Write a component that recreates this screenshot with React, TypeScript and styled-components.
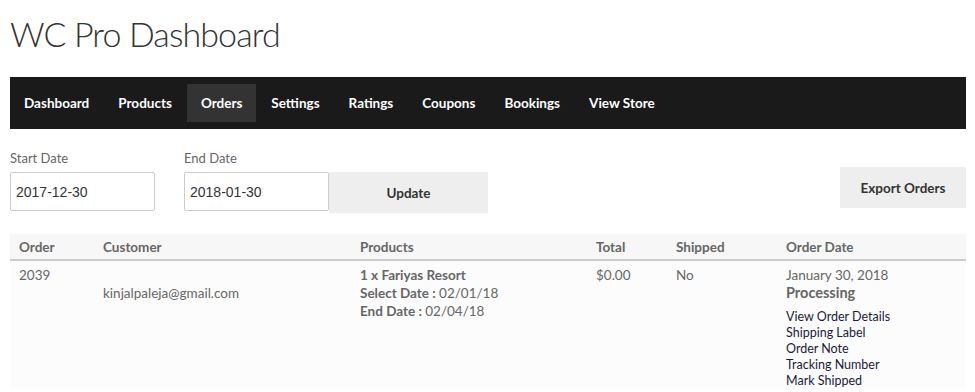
import React from "react";
import styled, { createGlobalStyle } from "styled-components";

const GlobalStyle = createGlobalStyle`
  body {
    margin: 0;
    background: #fff;
    font-family: Lato, "Open Sans", sans-serif;
  }
`;

const navItems = [
  "Dashboard",
  "Products",
  "Orders",
  "Settings",
  "Ratings",
  "Coupons",
  "Bookings",
  "View Store",
];

const orderLinks = [
  "View Order Details",
  "Shipping Label",
  "Order Note",
  "Tracking Number",
  "Mark Shipped",
];

const App = () => {
  return (
    <>
      <GlobalStyle />
      <Page>
        <Title>WC Pro Dashboard</Title>
        <NavBar>
          {navItems.map(item => (
            <NavItem key={item} active={item === "Orders"}>
              {item}
            </NavItem>
          ))}
        </NavBar>

        <Filters>
          <DateGroup>
            <Label>Start Date</Label>
            <DateInput defaultValue="2017-12-30" />
          </DateGroup>
          <DateGroup>
            <Label>End Date</Label>
            <InputRow>
              <DateInput defaultValue="2018-01-30" />
              <UpdateButton>Update</UpdateButton>
            </InputRow>
          </DateGroup>
          <ExportButton>Export Orders</ExportButton>
        </Filters>

        <Table>
          <thead>
            <tr>
              <Th width={84}>Order</Th>
              <Th width={257}>Customer</Th>
              <Th width={236}>Products</Th>
              <Th width={80}>Total</Th>
              <Th width={110}>Shipped</Th>
              <Th>Order Date</Th>
            </tr>
          </thead>
          <tbody>
            <tr>
              <Td>2039</Td>
              <Td>
                <Line>&nbsp;</Line>
                <Line>kinjalpaleja@gmail.com</Line>
              </Td>
              <Td>
                <Line bold>1 x Fariyas Resort</Line>
                <Line bold>
                  Select Date : <span>02/01/18</span>
                </Line>
                <Line bold>
                  End Date : <span>02/04/18</span>
                </Line>
              </Td>
              <Td>$0.00</Td>
              <Td>No</Td>
              <Td>
                <Line>January 30, 2018</Line>
                <Status>Processing</Status>
                <Links>
                  {orderLinks.map(l => (
                    <OrderLink key={l} href="#">
                      {l}
                    </OrderLink>
                  ))}
                </Links>
              </Td>
            </tr>
          </tbody>
        </Table>
      </Page>
    </>
  );
};

export default App;

const Page = styled.div`
  padding: 0 9px 0 10px;
`;

const Title = styled.h1`
  margin: 0;
  padding-top: 12px;
  height: 77px;
  box-sizing: border-box;
  font-family: Lato, sans-serif;
  font-weight: 300;
  font-size: 34px;
  line-height: 44px;
  color: #333;
  letter-spacing: -0.9px;
`;

const NavBar = styled.nav`
  display: flex;
  align-items: center;
  gap: 1px;
  height: 52px;
  background: #1a1a1a;
`;

const NavItem = styled.a<{ active?: boolean }>`
  display: flex;
  align-items: center;
  height: 38px;
  padding: 0 14px;
  font-size: 13.5px;
  font-weight: 700;
  color: #fff;
  background: ${p => (p.active ? "#333" : "transparent")};
  cursor: pointer;
`;

const Filters = styled.div`
  display: flex;
  align-items: flex-start;
  gap: 29px;
  padding-top: 21px;
  height: 105px;
  box-sizing: border-box;
`;

const DateGroup = styled.div`
  display: flex;
  flex-direction: column;
  gap: 5px;
`;

const Label = styled.label`
  font-size: 13px;
  line-height: 17px;
  color: #666;
`;

const InputRow = styled.div`
  display: flex;
  align-items: flex-start;
`;

const DateInput = styled.input`
  width: 145px;
  height: 39px;
  box-sizing: border-box;
  border: 1px solid #ccc;
  border-radius: 2px;
  padding: 0 5px;
  font-family: "Liberation Sans", Arial, sans-serif;
  font-size: 14px;
  color: #333;
  outline: none;
`;

const UpdateButton = styled.button`
  width: 159px;
  height: 41px;
  border: none;
  background: #eee;
  font-family: Lato, sans-serif;
  font-size: 13.5px;
  font-weight: 700;
  color: #333;
`;

const ExportButton = styled.button`
  margin-left: auto;
  margin-top: 17px;
  width: 126px;
  height: 41px;
  border: none;
  background: #eee;
  font-family: Lato, sans-serif;
  font-size: 13.5px;
  font-weight: 700;
  color: #333;
`;

const Table = styled.table`
  width: 956px;
  border-collapse: collapse;
  table-layout: fixed;
  background: #fcfcfc;
`;

const Th = styled.th<{ width?: number }>`
  box-sizing: border-box;
  width: ${p => (p.width ? `${p.width}px` : "auto")};
  height: 26px;
  padding: 0 9px;
  text-align: left;
  font-size: 13.5px;
  font-weight: 700;
  color: #666;
  background: #f7f7f7;
  border-bottom: 2px solid #ccc;
`;

const Td = styled.td`
  vertical-align: top;
  padding: 5px 9px 0;
  font-size: 13.5px;
  line-height: 18px;
  color: #666;
`;

const Line = styled.div<{ bold?: boolean }>`
  font-weight: ${p => (p.bold ? 700 : 400)};
  white-space: nowrap;

  & span {
    font-weight: 400;
  }
`;

const Status = styled.div`
  font-size: 14.5px;
  font-weight: 700;
  line-height: 18px;
`;

const Links = styled.div`
  display: flex;
  flex-direction: column;
  padding-top: 7px;
`;

const OrderLink = styled.a`
  font-size: 12.5px;
  line-height: 16px;
  color: #1a1a3a;
  text-decoration: none;
`;
